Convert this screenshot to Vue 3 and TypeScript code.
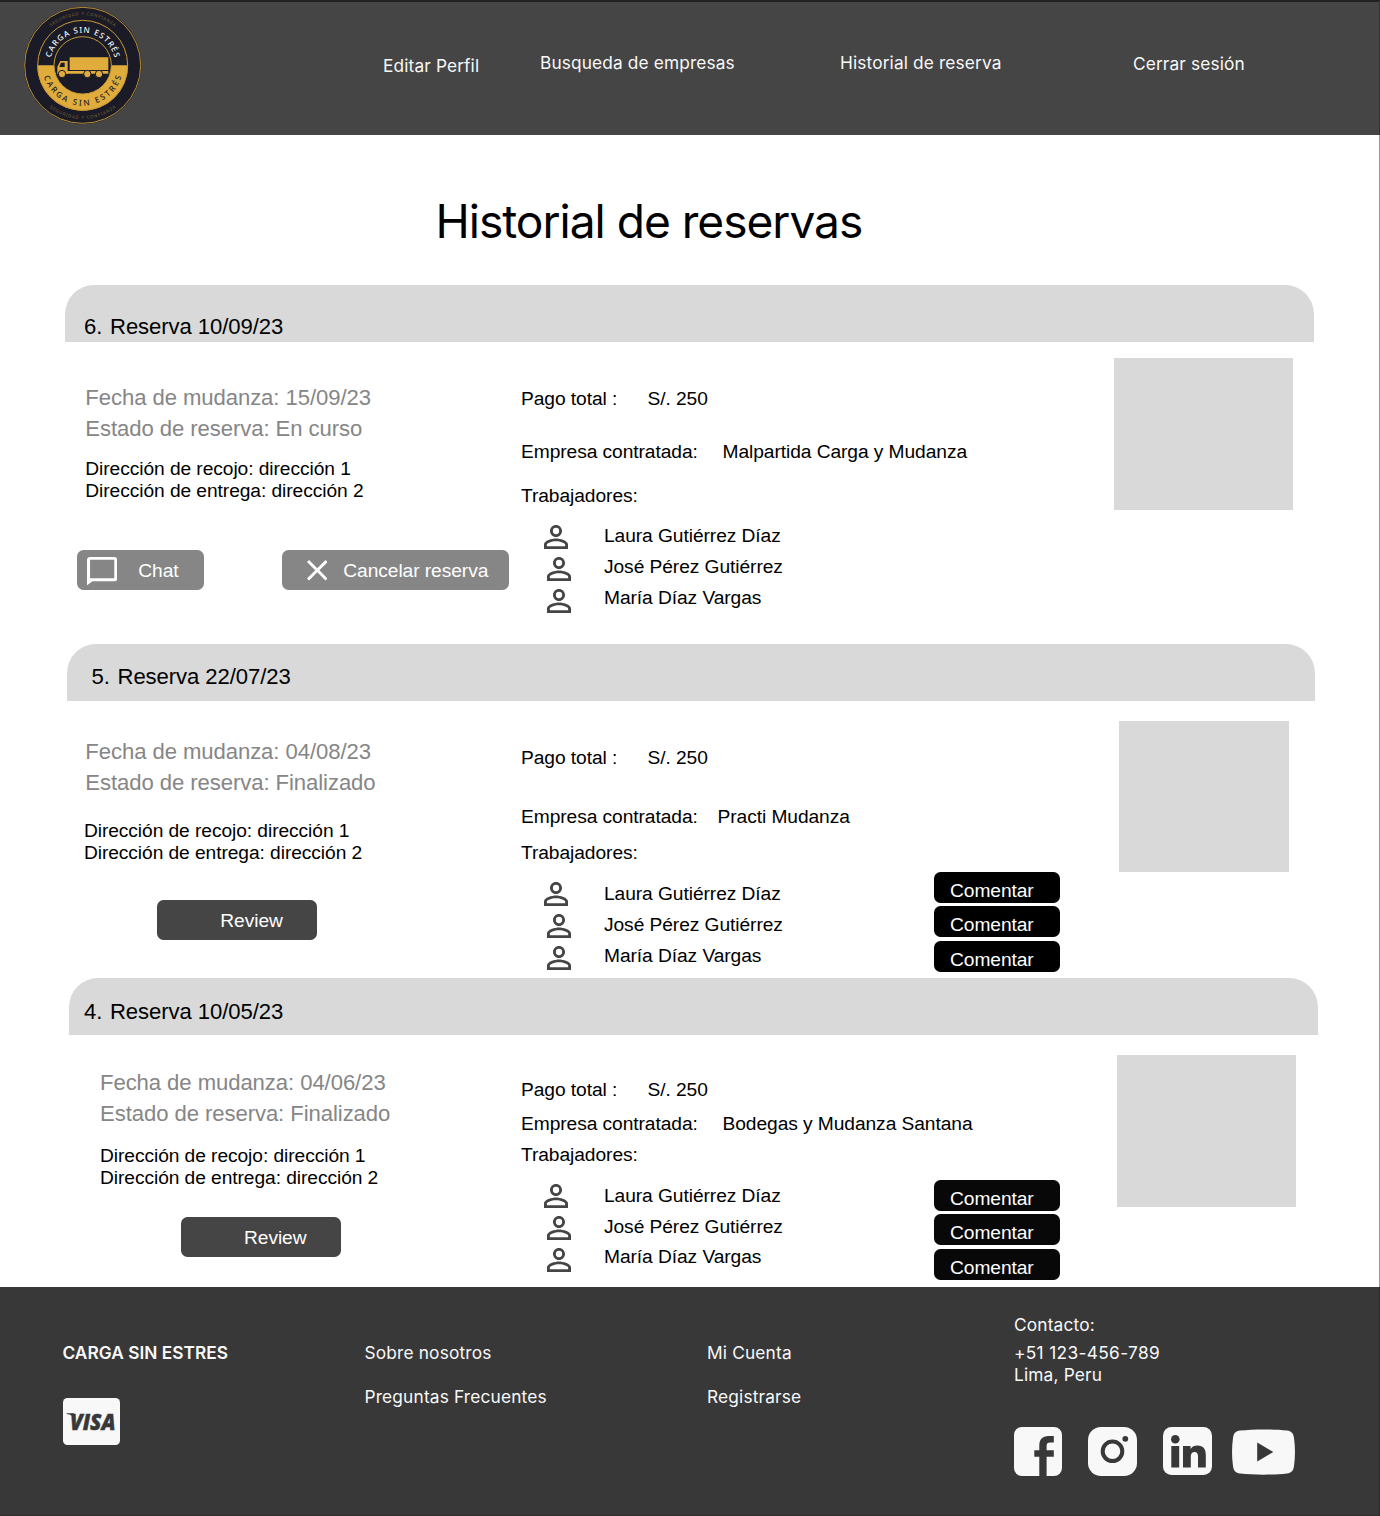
<script setup lang="ts">
interface Reservation {
  variant: string
  order: string
  title: string
  movingDate: string
  status: string
  company: string
  active: boolean
}

const navItems = [
  { label: 'Editar Perfil', cls: 'nav-profile' },
  { label: 'Busqueda de empresas', cls: 'nav-search' },
  { label: 'Historial de reserva', cls: 'nav-history' },
  { label: 'Cerrar sesión', cls: 'nav-logout' },
]

const workers: string[] = ['Laura Gutiérrez Díaz', 'José Pérez Gutiérrez', 'María Díaz Vargas']

const reservations: Reservation[] = [
  {
    variant: 'card-six',
    order: '6.',
    title: 'Reserva 10/09/23',
    movingDate: '15/09/23',
    status: 'En curso',
    company: 'Malpartida Carga y Mudanza',
    active: true,
  },
  {
    variant: 'card-five',
    order: '5.',
    title: 'Reserva 22/07/23',
    movingDate: '04/08/23',
    status: 'Finalizado',
    company: 'Practi Mudanza',
    active: false,
  },
  {
    variant: 'card-four',
    order: '4.',
    title: 'Reserva 10/05/23',
    movingDate: '04/06/23',
    status: 'Finalizado',
    company: 'Bodegas y Mudanza Santana',
    active: false,
  },
]
</script>

<template>
  <div class="page">
    <header class="topbar">
      <svg class="logo" viewBox="69 18 360 360" role="img" aria-label="Carga sin estrés">
        <defs>
          <path id="arc-top" d="M150 196a98 98 0 0 1 196 0" />
          <path id="arc-bottom" d="M127 196a121 121 0 0 0 242 0" />
          <path id="arc-outer-top" d="M98 196a150 150 0 0 1 300 0" />
          <path id="arc-outer-bottom" d="M87 196a161 161 0 0 0 322 0" />
        </defs>
        <circle cx="248" cy="196" r="176" fill="#1b1b28" />
        <circle cx="248" cy="196" r="174" fill="none" stroke="#b98d30" stroke-width="3" />
        <path d="M112 196a136 136 0 0 0 272 0z" fill="#e0ac3b" />
        <circle cx="248" cy="196" r="135" fill="none" stroke="#c79a37" stroke-width="3" />
        <circle cx="248" cy="196" r="86" fill="#1b1b28" stroke="#c79a37" stroke-width="3" />
        <text class="ring white"><textPath href="#arc-top" startOffset="50%" text-anchor="middle" textLength="262">CARGA SIN ESTRÉS</textPath></text>
        <text class="ring dark"><textPath href="#arc-bottom" startOffset="50%" text-anchor="middle" textLength="312">CARGA SIN ESTRÉS</textPath></text>
        <text class="ring tiny"><textPath href="#arc-outer-top" startOffset="50%" text-anchor="middle" textLength="206">SEGURIDAD Y CONFIANZA</textPath></text>
        <text class="ring tiny"><textPath href="#arc-outer-bottom" startOffset="50%" text-anchor="middle" textLength="214">SEGURIDAD Y CONFIANZA</textPath></text>
        <g fill="#e0ac3b">
          <path d="M209 172h116v38H209z" />
          <path d="M181 183h22v39h-31v-22z" />
          <path d="M200 213h125v8H200z" />
        </g>
        <path d="M183 188h11v13h-16z" fill="#1b1b28" />
        <g fill="#e0ac3b" stroke="#1b1b28" stroke-width="3">
          <circle cx="186" cy="222" r="11" />
          <circle cx="262" cy="222" r="11" />
          <circle cx="297" cy="222" r="11" />
        </g>
      </svg>
      <nav class="nav">
        <a v-for="item in navItems" :key="item.label" :class="item.cls">{{ item.label }}</a>
      </nav>
    </header>

    <main class="main">
      <h1 class="heading">Historial de reservas</h1>

      <section v-for="r in reservations" :key="r.order" class="card" :class="r.variant">
        <div class="bar">
          <span class="order">{{ r.order }}</span>
          <span>{{ r.title }}</span>
        </div>
        <div class="body">
          <div class="info">
            <div class="summary">
              <div>Fecha de mudanza: {{ r.movingDate }}</div>
              <div>Estado de reserva: {{ r.status }}</div>
            </div>
            <div class="address">
              <div>Dirección de recojo: dirección 1</div>
              <div>Dirección de entrega: dirección 2</div>
            </div>
            <div v-if="r.active" class="actions">
              <button class="btn btn-chat">
                <svg class="chat-icon" viewBox="2 2 20 20" preserveAspectRatio="none"><path fill="#fff" fill-rule="evenodd" d="M20 2H4c-1.1 0-2 .9-2 2v18l3.600-2.800H20c1.100 0 2-.9 2-2V4c0-1.100-.9-2-2-2zm0 15.100H4V4h16z" /></svg>
                <span>Chat</span>
              </button>
              <button class="btn btn-cancel">
                <svg class="close-icon" viewBox="5 5 14 14"><path fill="#fff" d="M19 6.41 17.59 5 12 10.59 6.41 5 5 6.41 10.59 12 5 17.59 6.41 19 12 13.41 17.59 19 19 17.59 13.41 12z" /></svg>
                <span>Cancelar reserva</span>
              </button>
            </div>
            <div v-else class="actions">
              <button class="btn btn-review">Review</button>
            </div>
          </div>

          <div class="detail">
            <div class="row"><span class="pay-label">Pago total :</span><span>S/. 250</span></div>
            <div class="row company"><span class="company-label">Empresa contratada:</span><span>{{ r.company }}</span></div>
            <div class="row crew-title">Trabajadores:</div>
            <div class="crew">
              <div class="crew-icons">
                <svg v-for="w in workers" :key="w" class="person" viewBox="4 4 16 16"><path fill="#454545" d="M12 5.9a2.1 2.1 0 1 1 0 4.2 2.1 2.1 0 0 1 0-4.2m0 9c2.97 0 6.1 1.46 6.1 2.1v1.1H5.9V17c0-.64 3.13-2.1 6.1-2.1M12 4C9.79 4 8 5.79 8 8s1.79 4 4 4 4-1.79 4-4-1.79-4-4-4zm0 9c-2.67 0-8 1.34-8 4v3h16v-3c0-2.66-5.33-4-8-4z" /></svg>
              </div>
              <div class="crew-names">
                <div v-for="w in workers" :key="w">{{ w }}</div>
              </div>
            </div>
          </div>

          <div class="comments">
            <template v-if="!r.active">
              <button v-for="w in workers" :key="w" class="comment">Comentar</button>
            </template>
          </div>

          <div class="photo"></div>
        </div>
      </section>
    </main>

    <footer class="footer">
      <div class="brand">
        <div class="brand-name">CARGA SIN ESTRES</div>
        <svg class="visa" viewBox="0 0 57 47" role="img" aria-label="Visa">
          <rect width="57" height="47" rx="4.5" fill="#f8f8f8" />
          <path d="M3.600 15.300h7.200l1.600 6c-1.700-3.200-4.800-4.900-8.800-5.400z" fill="#383838" />
          <text x="7" y="31.800" textLength="45.500" lengthAdjust="spacingAndGlyphs" class="visa-text">VISA</text>
        </svg>
      </div>
      <div class="links links-about">
        <a>Sobre nosotros</a>
        <a>Preguntas Frecuentes</a>
      </div>
      <div class="links links-account">
        <a>Mi Cuenta</a>
        <a>Registrarse</a>
      </div>
      <div class="contact">
        <div class="contact-title">Contacto:</div>
        <div class="phone">+51 123-456-789</div>
        <div>Lima, Peru</div>
        <div class="social">
          <svg class="facebook" viewBox="0 0 48 49">
            <rect width="48" height="49" rx="8" fill="#f8f8f8" />
            <path fill="#383838" d="M25.300 49V29.700h-5v-6.500h5v-4.700c0-6.200 3.300-9.600 9-9.600h5.500v6.600h-3.600c-2.700 0-3.600 1.100-3.600 3.500v4.200h7.200v6.500h-7.200V49z" />
          </svg>
          <svg class="instagram" viewBox="0 0 49 49">
            <rect width="49" height="49" rx="13" fill="#f8f8f8" />
            <circle cx="24.500" cy="24.300" r="9.800" fill="none" stroke="#383838" stroke-width="4" />
            <circle cx="37.300" cy="11.800" r="2.900" fill="#383838" />
          </svg>
          <svg class="linkedin" viewBox="0 0 49 48">
            <rect width="49" height="48" rx="8.500" fill="#f8f8f8" />
            <g fill="#383838">
              <circle cx="12.300" cy="12.200" r="4.300" />
              <path d="M8.300 19h7.900v21.500H8.300z" />
              <path d="M20 19h7.500v3c1.500-2.400 3.800-3.500 7-3.500 5.900 0 8.300 3.500 8.300 9.800v12.200H35V29.600c0-3-1-4.600-3.400-4.600-2.500 0-3.800 1.700-3.800 4.600v10.900H20z" />
            </g>
          </svg>
          <svg class="youtube" viewBox="0 0 63 46">
            <path fill="#f8f8f8" d="M8 1.500C22 0 41 0 55 1.500c4.500.5 6.500 3 7 7.500 1.300 9.500 1.300 18.500 0 28-.5 4.500-2.500 7-7 7.500-14 1.500-33 1.500-47 0-4.500-.5-6.500-3-7-7.500-1.300-9.500-1.300-18.500 0-28 .5-4.500 2.500-7 7-7.500z" />
            <path fill="#383838" d="M25.200 13.500v19L41.300 23z" />
          </svg>
        </div>
      </div>
    </footer>
  </div>
</template>

<style>
body {
  margin: 0;
  background: #fff;
}
</style>

<style scoped>
.page {
  width: 1380px;
  height: 1516px;
  box-sizing: border-box;
  display: flex;
  flex-direction: column;
  overflow: hidden;
  background: #fff;
  color: #000;
  font-family: "Liberation Sans", Arial, sans-serif;
  font-size: 19.2px;
  line-height: 22px;
  letter-spacing: -0.07px;
  white-space: nowrap;
}

.topbar {
  display: flex;
  align-items: flex-start;
  height: 135px;
  flex: none;
  box-sizing: border-box;
  border-top: 2px solid #222;
  border-right: 1px solid #333;
  background: #454545;
}
.logo {
  width: 120px;
  height: 120px;
  margin: 4px 0 0 23px;
  flex: none;
}
.ring {
  font-family: "Noto Sans", sans-serif;
  font-size: 24px;
  font-weight: 500;
  letter-spacing: 0;
}
.white { fill: #f4f4f4; }
.dark { fill: #1b1b28; }
.tiny {
  font-size: 13px;
  font-weight: 400;
  fill: #80632b;
}
.nav {
  display: grid;
  grid-template-columns: 157px 300px 293px auto;
  margin-left: 240px;
  color: #f8f8f8;
  font-family: Inter, sans-serif;
  font-size: 17.28px;
  line-height: 21px;
  letter-spacing: 0.14px;
}
.nav-profile { padding-top: 53px; }
.nav-search,
.nav-history { padding-top: 50px; }
.nav-logout { padding-top: 51px; }

.main {
  flex: none;
  height: 1152px;
  box-sizing: border-box;
  border-right: 1px solid #999;
}
.heading {
  height: 56px;
  margin: 0;
  padding: 58px 0 36px 435.500px;
  font-family: Inter, sans-serif;
  font-size: 46.1px;
  font-weight: 400;
  line-height: 56px;
  letter-spacing: -1.010px;
}

.card-six { height: 359px; }
.card-five { height: 334px; }
.card-four { height: 309px; }

.bar {
  display: flex;
  box-sizing: border-box;
  width: 1248.5px;
  height: 57px;
  border-radius: 29px 29px 0 0;
  background: #d9d9d9;
  font-size: 22.1px;
  line-height: 25px;
}
.order { width: 26px; }
.card-six .bar { margin-left: 65px; padding: 29px 0 0 19px; }
.card-five .bar { margin-left: 66.500px; padding: 20px 0 0 25px; }
.card-four .bar { margin-left: 69.300px; padding: 21px 0 0 14.700px; }

.body {
  display: grid;
  grid-template-columns: 521px 413px 180px auto;
  align-items: start;
}

.summary {
  color: #868686;
  font-size: 22.1px;
  line-height: 31px;
}
.card-six .info { padding: 40px 0 0 85.300px; }
.card-five .info { padding: 35px 0 0 85.300px; }
.card-four .info { padding: 32px 0 0 100px; }
.card-six .address { margin-top: 14px; }
.card-five .address { margin: 22px 0 0 -1.400px; }
.card-four .address { margin-top: 16px; }
.actions { display: flex; }
.card-six .actions { margin: 48px 0 0 -8.300px; gap: 78px; }
.card-five .actions { margin: 36px 0 0 72px; }
.card-four .actions { margin: 28px 0 0 81px; }

.btn,
.comment {
  border: 0;
  margin: 0;
  box-sizing: border-box;
  font: inherit;
  letter-spacing: inherit;
  color: #fff;
  text-align: left;
  white-space: nowrap;
}
.btn {
  display: flex;
  align-items: flex-start;
  height: 39.500px;
  padding: 0;
  border-radius: 6.500px;
  background: #868686;
  flex: none;
}
.btn span { padding-top: 10px; }
.btn-chat { width: 127px; }
.btn-cancel { width: 227px; }
.btn-review {
  width: 160px;
  padding: 10px 0 0 63px;
  background: #454545;
}
.chat-icon {
  width: 30.300px;
  height: 28.300px;
  margin: 7px 21.300px 0 9.700px;
}
.close-icon {
  width: 20.600px;
  height: 20.600px;
  margin: 10px 16px 0 24.700px;
}

.row { display: flex; }
.card-six .detail,
.card-five .detail { padding-top: 46px; }
.card-four .detail { padding-top: 44px; }
.pay-label,
.company-label { flex: none; }
.pay-label { width: 126.500px; }
.company-label { width: 201.500px; }
.card-five .company-label { width: 196.500px; }
.card-six .company { margin-top: 31px; }
.card-five .company { margin-top: 37px; }
.card-four .company { margin-top: 12px; }
.card-six .crew-title { margin-top: 22px; }
.card-five .crew-title { margin-top: 14px; }
.card-four .crew-title { margin-top: 9px; }
.crew {
  display: flex;
  margin-top: 19px;
}
.card-six .crew { margin-top: 18px; }
.crew-icons {
  display: flex;
  flex-direction: column;
  gap: 8px;
  width: 60px;
  padding-left: 23px;
}
.card-five .crew-icons { margin-top: -1px; }
.card-four .crew-icons { margin-top: -1px; }
.person {
  width: 24px;
  height: 24px;
  margin-left: 3px;
}
.person:first-child { margin-left: 0; }
.crew-names {
  display: flex;
  flex-direction: column;
  gap: 8.800px;
}
.card-four .crew-names { gap: 8.600px; }

.comments {
  display: flex;
  flex-direction: column;
  align-items: flex-start;
}
.card-five .comments { padding-top: 171px; }
.card-four .comments { padding-top: 145px; }
.comment {
  width: 126px;
  height: 31px;
  padding: 7px 0 0 16px;
  border-radius: 6.500px;
  background: #000;
}
.card-four .comment { background: #080808; }
.comment + .comment { margin-top: 3px; }
.comment:last-child { margin-top: 4px; }

.photo { background: #d9d9d9; }
.card-six .photo { width: 179px; height: 152px; margin-top: 16px; }
.card-five .photo { width: 170px; height: 151px; margin: 20px 0 0 5px; }
.card-four .photo { width: 179px; height: 152px; margin: 20px 0 0 3px; }

.footer {
  display: grid;
  grid-template-columns: 364.500px 342.500px 307px auto;
  align-items: start;
  flex: none;
  height: 229px;
  box-sizing: border-box;
  border-right: 1px solid #2b2b2b;
  border-bottom: 1px solid #2e2c2d;
  background: #383838;
  color: #f8f8f8;
  font-family: Inter, sans-serif;
  font-size: 17.28px;
  line-height: 22px;
  letter-spacing: 0.18px;
}
.brand { padding: 55px 0 0 62.500px; }
.brand-name {
  font-weight: 600;
  letter-spacing: 0.03px;
}
.visa {
  display: block;
  width: 57px;
  height: 47px;
  margin-top: 34px;
}
.visa-text {
  fill: #383838;
  stroke: #383838;
  stroke-width: 0.500px;
  font-family: "Open Sans", sans-serif;
  font-size: 23px;
  font-weight: 800;
  font-style: italic;
  letter-spacing: 0;
}
.links {
  display: flex;
  flex-direction: column;
  gap: 22px;
  padding-top: 55px;
}
.contact { padding-top: 27px; }
.contact-title { margin-bottom: 6px; }
.phone { letter-spacing: 0.35px; }
.social {
  display: flex;
  margin-top: 41px;
}
.social svg { flex: none; }
.facebook { width: 48px; height: 49px; }
.instagram { width: 49px; height: 49px; margin-left: 26px; }
.linkedin { width: 49px; height: 48px; margin-left: 26px; }
.youtube { width: 63px; height: 46px; margin: 2px 0 0 20px; }
</style>
